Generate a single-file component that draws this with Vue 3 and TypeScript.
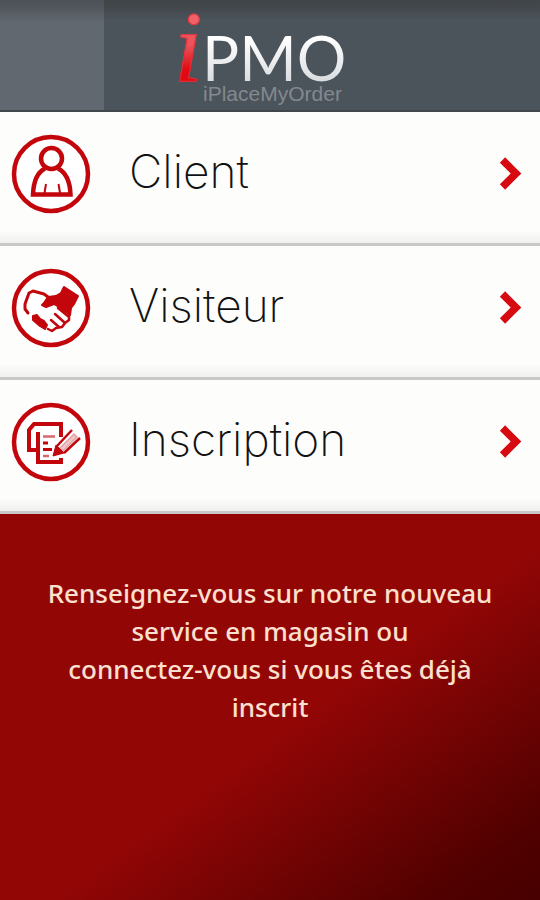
<script setup lang="ts">
type IconName = 'client' | 'visitor' | 'signup'

interface MenuEntry {
  icon: IconName
  label: string
  href: string
}

const entries: MenuEntry[] = [
  { icon: 'client', label: 'Client', href: '#client' },
  { icon: 'visitor', label: 'Visiteur', href: '#visiteur' },
  { icon: 'signup', label: 'Inscription', href: '#inscription' },
]
</script>

<template>
  <div class="screen">
    <header class="header">
      <div class="header-tab"></div>
      <h1 class="logo">
        <span class="logo-i">i</span>
        <span class="logo-words">
          <span class="logo-name">PMO</span>
          <span class="logo-tagline">iPlaceMyOrder</span>
        </span>
      </h1>
    </header>

    <nav>
      <ul class="menu">
        <li v-for="entry in entries" :key="entry.icon">
          <a class="row" :href="entry.href">
            <svg class="badge" viewBox="0 0 80 80" aria-hidden="true">
              <circle cx="40" cy="40" r="37" fill="#fff" stroke="#c3060c" stroke-width="4.5" />

              <g v-if="entry.icon === 'client'" fill="none" stroke="#c3060c" stroke-width="4.5">
                <circle cx="40.500" cy="24.500" r="10.5" />
                <path d="M34 34.500C27 38 22.500 47 22 60.500H59.500C59 47 54 38 47 34.500" />
                <path d="M35 50L33.500 59M47.500 50L49 59" stroke-width="2" />
              </g>

              <g v-else-if="entry.icon === 'visitor'">
                <path
                  d="M33 35L37 29L45 28L50 25L53 19L67 28L63 36L60 40L59 47L48 39L43 36L35 39L31 37Z"
                  fill="#c3060c"
                  stroke="#c3060c"
                  stroke-width="2"
                  stroke-linejoin="round"
                />
                <path
                  d="M37 29L33 26L22 23L18 25L14 36V41L17 45"
                  fill="none"
                  stroke="#c3060c"
                  stroke-width="3"
                  stroke-linecap="round"
                  stroke-linejoin="round"
                />
                <path
                  d="M47 40L58 49M44 46L54 55M40 52L48 59M58 47V52L54 55L51 59L45 60L41 63L37 61"
                  fill="none"
                  stroke="#c3060c"
                  stroke-width="2.500"
                  stroke-linecap="round"
                  stroke-linejoin="round"
                />
                <path d="M22 48L26 47L29 51L33 53L36 57L34 61L29 58L22 52Z" fill="#c3060c" stroke="#c3060c" stroke-width="2" stroke-linejoin="round" />
              </g>

              <g v-else fill="none" stroke="#c3060c">
                <path d="M26 48H18V28L23 22H50V31" stroke-width="4" />
                <path d="M27 30V60H50V56M50 30V35" stroke-width="4" />
                <path d="M32 34.500H44M32 54H38" stroke="#d6676c" stroke-width="2.500" />
                <path d="M32 41H37M32 47.500H41" stroke-width="3" />
                <path d="M46 44L61 28M53 51L69 36" stroke-width="2.500" />
                <path d="M49 46L63 32L66 35L52 49Z" fill="#efc4c6" stroke="#e0a3a6" stroke-width="1.500" />
                <path d="M45 43L53 51L42 54Z" fill="#c3060c" stroke-width="1" />
              </g>
            </svg>

            <span class="label">{{ entry.label }}</span>

            <svg class="chevron" viewBox="0 0 24 36" aria-hidden="true">
              <path d="M3.500 4L17 17.500L3.500 31" fill="none" stroke="#d60a10" stroke-width="7.500" />
            </svg>
          </a>
        </li>
      </ul>
    </nav>

    <main class="info">
      <p>
        Renseignez-vous sur notre nouveau<br />
        service en magasin ou<br />
        connectez-vous si vous êtes déjà<br />
        inscrit
      </p>
    </main>
  </div>
</template>

<style>
body {
  margin: 0;
}
</style>

<style scoped>
.screen {
  display: flex;
  flex-direction: column;
  min-height: 100vh;
}

.header {
  display: grid;
  grid-template-columns: 104px 1fr;
  height: 112px;
  box-sizing: border-box;
  border-bottom: 2px solid #42474c;
  background: linear-gradient(#414548 0, #43484c 8px, #4b535b 20px, #4b535b 100%);
}

.header-tab {
  background: linear-gradient(#4c5057 0, #54595f 10px, #62686f 22px, #62686f 100%);
}

.logo {
  display: flex;
  align-items: flex-start;
  margin: 0;
  padding-left: 70px;
}

.logo-i {
  width: 28px;
  font: italic 400 102px/96px "Liberation Serif", serif;
  color: transparent;
  background: linear-gradient(#f0626a 20px, #ea5259 45px, #e10a12 70px);
  -webkit-background-clip: text;
  background-clip: text;
  -webkit-text-stroke: 1px #e4323a;
}

.logo-words {
  display: flex;
  flex-direction: column;
  padding-top: 28px;
}

.logo-name {
  font: 400 62px/58px Lato, sans-serif;
  color: transparent;
  background: linear-gradient(#ffffff 10px, #d9dcdf 54px);
  -webkit-background-clip: text;
  background-clip: text;
}

.logo-tagline {
  padding-left: 1px;
  font: 400 21px/16px "Liberation Sans", sans-serif;
  color: #83898f;
}

.menu {
  margin: 0;
  padding: 0;
  list-style: none;
}

.row {
  display: flex;
  align-items: center;
  height: 134px;
  box-sizing: border-box;
  padding: 0 17px 7px 11px;
  border-bottom: 3px solid #c8c8c8;
  background: linear-gradient(#fdfdfc 90%, #f0f0ef);
  text-decoration: none;
}

.badge {
  flex: none;
  width: 80px;
  height: 80px;
}

.label {
  flex: 1;
  padding: 0 0 6px 38px;
  font: 200 46px/56px Inter, "Liberation Sans", sans-serif;
  color: #111;
}

.chevron {
  flex: none;
  width: 24px;
  height: 36px;
}

.info {
  flex: 1;
  padding: 60px 20px;
  background: linear-gradient(144deg, #930606 0, #930606 54%, #6c0303 75%, #500000 90%, #480000 100%);
}

.info p {
  margin: 0;
  font: 500 26px/38px "Noto Sans", sans-serif;
  text-align: center;
  color: #fbe0cf;
}
</style>
